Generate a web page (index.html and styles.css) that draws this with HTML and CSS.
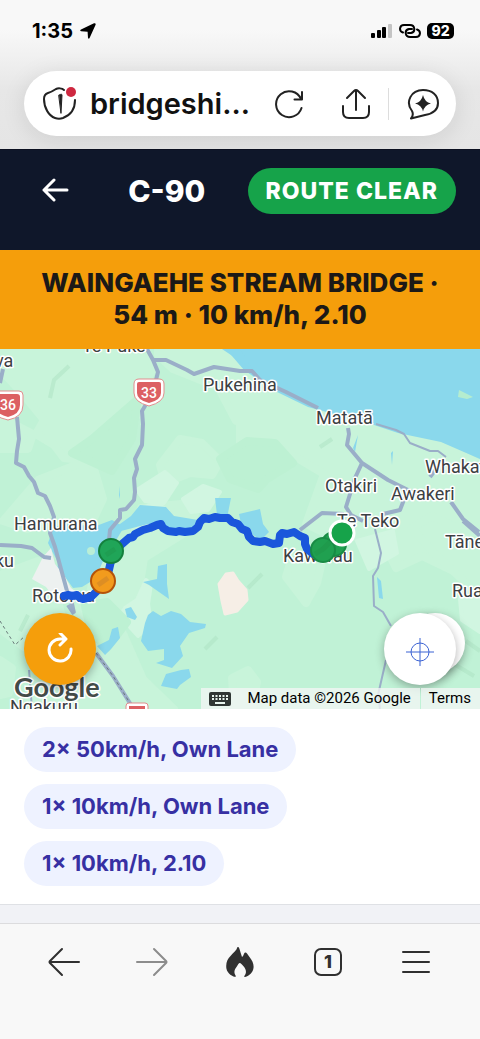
FILE: index.html
```html
<!DOCTYPE html>
<html lang="en">
    <head>
        <meta charset="utf-8" />
        <meta name="viewport" content="width=device-width, initial-scale=1.0" />
        <title>C-90 Route</title>
        <link rel="stylesheet" href="styles.css">
    </head>

    <body>
        <div class="browser-top">
            <div class="status-bar">
                <div class="status-group">
                    <span class="clock">1:35</span>
                    <svg width="16" height="16" viewBox="0 0 16 16"><path d="M1 6.500 14 .3Q16-.3 15.600 1.800L9.700 14.800Q8.700 16.500 8 14.800L7.600 8.700 1.200 8.200Q-.6 7.700 1 6.500Z"/></svg>
                </div>
                <div class="status-group status-right">
                    <svg width="22" height="16" viewBox="0 0 22 16">
                        <rect x="0" y="10" width="4" height="5" rx="1"/>
                        <rect x="6" y="7" width="4" height="8" rx="1"/>
                        <rect x="11" y="4" width="4" height="11" rx="1"/>
                        <rect x="17" y="1" width="4" height="14" rx="1" fill="#c4c4c4"/>
                    </svg>
                    <svg class="line" width="22" height="16" viewBox="0 0 22 16" stroke-width="2">
                        <path d="M4 9.500C-.5 8 .5 2 5 2h6c5 0 6 7 1 8H9"/>
                        <path d="M18 6.500c4.500 1.500 3.500 7.500-1 7.500h-6c-5 0-6-7-1-8h3"/>
                    </svg>
                    <span class="battery">92</span>
                </div>
            </div>
            <div class="address-bar">
                <button class="icon-btn" aria-label="Privacy protections">
                    <svg class="line" width="34" height="34" viewBox="0 0 34 34" stroke-width="2">
                        <path d="M21 3c-2-2-6-2-8-1-3 2-5 3-8 4-3 1-4 3-4 6 0 9 5 17 11 19 3 1 5 1 8 0 8-3 12-10 12-18"/>
                        <path d="M16 8c2-1 3-1 3 0l-1 18Z" fill="#222" stroke-width="1"/>
                        <circle cx="28" cy="5" r="5" fill="#ce2840" stroke="none"/>
                    </svg>
                </button>
                <a class="url" href="#">bridgeshi...</a>
                <button class="icon-btn reload-page" aria-label="Reload">
                    <svg class="line" width="30" height="30" viewBox="0 0 30 30" stroke-width="2">
                        <path d="M27.500 19A13 13 0 1 1 27 10"/>
                        <path d="M28 3v7.500h-7.500"/>
                    </svg>
                </button>
                <button class="icon-btn share" aria-label="Share">
                    <svg class="line" width="30" height="32" viewBox="0 0 30 32" stroke-width="2">
                        <path d="M15 22V2M6 10l7-7q2-2 4 0l7 7M2 18v6q0 6 6 6h14q6 0 6-6v-6"/>
                    </svg>
                </button>
                <button class="icon-btn chat" aria-label="Ask assistant">
                    <svg class="line" width="34" height="34" viewBox="0 0 34 34" stroke-width="2">
                        <path d="M6 24C-1 15 5 3 17 3c9 0 15 5 15 13S25 27 19 28L5 31.500Q8 28 6 24Z"/>
                        <path d="M17 8q1.500 7 8 8.500-6.500 1.500-8 8-1.500-6.500-8-8Q15.500 15 17 8Z" fill="#222" stroke="none"/>
                    </svg>
                </button>
            </div>
        </div>

        <header class="app-header">
            <button class="icon-btn back" aria-label="Back">
                <svg class="line" width="28" height="24" viewBox="0 0 28 24" stroke-width="3">
                    <path d="M25 12H2M12 2 2 12l10 10"/>
                </svg>
            </button>
            <h1>C-90</h1>
            <span class="route-status">ROUTE CLEAR</span>
        </header>

        <div class="bridge-banner">WAINGAEHE STREAM BRIDGE · 54 m · 10 km/h, 2.10</div>

        <div class="map">
            <svg class="map-canvas" viewBox="0 0 480 360" preserveAspectRatio="xMidYMid slice">
                <rect width="480" height="360" fill="#c0f2d6"/>

                <!-- lighter land -->
                <g class="land">
                    <path d="M0 0h146l7 20-11 22-2 22-28 23-17 4-15 20-16-2-10-13-18-11 8-14L22 44 0 20Z"/>
                    <path d="M0 68l33 17-5 15H0ZM38 131l53-21 12 40-18 38-38-20-20 12-24-8Z"/>
                    <path d="M180 90l22 4 18 18-8 14-22-2-25 10-5-18ZM158 0h80l40 38 30 20-17 10-55 4-18-34-45-18-15-14Z"/>
                    <path d="M240 20l100 50 67 8 73 37v120l-58-28-26 12-15-30-50-2-25-12 18-50-50-30-34 4Z"/>
                    <path d="M292 208l30 4-5 22-11 20-20-26ZM412 179l20-12 48 23v57l-47-44ZM0 226l38-14 14 16 10 40-38 30L0 280ZM95 222l34-18 12-45 60-6-15 30-42 26-8 50-28 26-24-14Z"/>
                    <path d="M80 250l41 30 22 50 31 30H24l19-36 30-23Z"/>
                    <path d="M0 311l12 8-3 25-9 2ZM232 329l16-8 9 12-5 27h-18Z"/>
                </g>
                <g class="land bright">
                    <path d="M137 141l28-18 12 11-13 20-19-2ZM183 150l20-13 17 6-12 18-17 2Z"/>
                    <path d="M146 231l5 4-3 20 3 20-13 12-18-20 5-8 12-8ZM142 159l15-5 11 8-8 16-22 4Z"/>
                    <path d="M357 192l36-10 4 22-28 16ZM460 250l20-7v40l-18-12Z"/>
                </g>
                <!-- forest -->
                <g class="land forest">
                    <path d="M92 90l46-40-6 40-20 32-40-18ZM247 92l28 2 18 20-26 16-9 10-28-10-10-20Z"/>
                    <path d="M85 257l22-4 20 20-20 26-16-16Z"/>
                </g>
                <path d="M50 49l4-18 15-14M248 239l14-14M320 98l12-8M205 300l12-12M20 282l8-16M466 292l14 10M454 315l20 12" class="ridges"/>

                <!-- water -->
                <g fill="#8ad8ec">
                    <path d="M226 0h254v110l-39-17-43-9-30-10-60-16-33-16-31-21Z"/>
                    <path d="M222 0h18l13 21-16-11Z"/>
                    <path d="M53 180l8-5 35 2 16-6 12 7-12 20-8 12-9 20-13 8-9 1-8-11-8-5 1-10-5-9-5-10Z"/>
                    <path d="M113 180l18-13 9-11 26 2 8 9 24 4-2 10-20 4-28-10-27 7ZM215 149h16l-3 15 3 6-10-2-4-2ZM239 165l21-5 3 15 6 8-8 8-19-12Z"/>
                    <path d="M158 217l9-2v20l2 15-20-14-6-3 14-3Z"/>
                    <path d="M148 266l5-4 8 5 10-5 10 3 9 8 16 2-1 4-16 5-9 13 3 10-11 12-16-5 8-3v-11l-16 2-7-10 4-18ZM125 260l6-2 6 10-2 3-8-3ZM112 280l6-2 2 11-9 11-6 6-8-9 12-6ZM166 325l15-4 8-1 2 8-11 8-3 4-16-3Z"/>
                    <path d="M377 228l4 4 2 18-4-1ZM119 146l1-9v9l-1 4ZM353 99l5-13-3 17ZM391 104l2-2-1 14Z"/>
                </g>
                <circle cx="91" cy="202" r="4" fill="#b9eed6"/>
                <path d="M459 41l14 7-6 2-9-2Z" fill="#b5edcf"/>
                <path d="M219 235l7-10 7-1 5 8 8 9 1 10-10 11-12 3-3-13Z" fill="#f6eee6" stroke="#f6eee6" stroke-width="3" stroke-linejoin="round"/>
                <path d="M43 208l8-9 4 16 9 11 7 13 7 5-3 9-16 2-13-17-14-8Z" fill="#edf1f0"/>

                <!-- highways -->
                <g class="roads">
                    <path d="M147 0l6 11 5 12-2 8-11 26-3 5 1 13-1 21-7 14 2 10-3 9 1 14-1 8-8 9-6 1v8l-10 12-1 10"/>
                    <path d="M153 11h13l21 10 7 4 20-7 26 4h12l8 9 26 12 32 16"/>
                    <path d="M3 20L0 34M17 68l2 22-2 12-1 12 8 4 5 9 5 6 4 11 7 3 5 10 4 11-4 16 5 14 12 44 5 13 2 9"/>
                    <path d="M0 196l21 1 11 2 12 9 7 1"/>
                    <path d="M348 79l1 6-2 11 15 18 26 17 16 8 16 8"/>
                    <path d="M362 114l-7 15-9 29 5 8 12 6M300 181l22-17 22 1M383 165l17-4 5-13M430 128l6-8M451 153l12 17 16 13"/>
                    <path d="M463 172l17 15M68 256l6 9M72 250l10-5" />
                </g>
                <g class="roads minor">
                    <path d="M376 75l20 6 8 4 6 9 20 8h8l8 6M375 180l6 24-3 15-5 8 1 30 9 6 8 14M386 311l-8 35 2 14M32 360l-3-39"/>
                </g>
                <path d="M96 304l17 23 20 32" class="roads"/>
                <path d="M96 304l17 23 20 32M0 272l15 24 10-9" class="track"/>

                <!-- towns -->
                <g class="places">
                    <text x="82" y="3">Te Puke</text>
                    <text x="-5" y="18">va</text>
                    <text x="203" y="42">Pukehina</text>
                    <text x="316" y="75">Matatā</text>
                    <text x="425" y="124">Whakatāne</text>
                    <text x="325" y="143">Otakiri</text>
                    <text x="391" y="151">Awakeri</text>
                    <text x="337" y="178">Te Teko</text>
                    <text x="14" y="181">Hamurana</text>
                    <text x="-5" y="218">ku</text>
                    <text x="32" y="253">Rotorua</text>
                    <text x="283" y="213">Kawerau</text>
                    <text x="445" y="199">Tāneatua</text>
                    <text x="452" y="248">Ruatoki</text>
                    <text x="10" y="364">Ngakuru</text>
                </g>

                <!-- route shields -->
                <g class="shields">
                    <path class="shield-edge" d="M-4 42H19q4 0 4 4v10q0 12-15 15Q-8 68-8 56V46q0-4 4-4Z"/>
                    <path class="shield" d="M-4 45H17q3 0 3 3v8q0 9-12 12Q-5 65-5 56v-8Z"/>
                    <text x="8" y="61">36</text>
                    <path class="shield-edge" d="M139 30h20q5 0 5 5v9q0 9-15 13-15-4-15-13v-9q0-5 5-5Z"/>
                    <path class="shield" d="M139 33h20q2 0 2 2v9q0 7-12 10-12-3-12-10v-9q0-2 2-2Z"/>
                    <text x="149" y="49">33</text>
                    <rect class="shield-edge" x="126" y="354" width="22" height="10" rx="3"/>
                    <rect class="shield" x="129" y="357" width="16" height="8"/>
                </g>

                <!-- planned route -->
                <path class="route" d="M64 247l4-1 4 1 5-1 3 3 3 1 8-2 7-7 5-3 5-13 3-13 2-8 9-9 7-6 4-1 2-3 8-4 7-2 7-3 4-1 2 4 5 3 8 1 3-1 6 1 8-1 5-4 2-5 4-4 5 1 6-2 5 1h8l4 4 6 2 4 5 5 2 2 6 4 4 7 1 5-1 8 3 6-1 1-8 2-2 5 1 7-2 6 4 5 2v6l2 5 6 5 8-2"/>
                <g stroke-width="2">
                    <circle cx="334" cy="195" r="12" fill="#20a050" stroke="#188b44"/>
                    <circle cx="323" cy="201" r="12" fill="#20a050" stroke="#188b44"/>
                    <circle cx="111" cy="202" r="12" fill="#20a558" stroke="#14803d"/>
                    <circle cx="103" cy="232" r="12" fill="#f29b1d" stroke="#b45309"/>
                    <path d="M315 205l8-5 7-7M106 206l9-6" stroke="#20813c" fill="none" opacity=".2" stroke-width="5"/>
                    <path d="M98 236l10-7" stroke="#c9832c" opacity=".5" stroke-width="5"/>
                    <circle cx="342" cy="184" r="12" fill="#16a34a" stroke="#fff" stroke-width="3"/>
                </g>
                <text x="14" y="348" class="logo">Google</text>
            </svg>

            <button class="map-btn refresh" aria-label="Refresh route">
                <svg class="line" width="28" height="32" viewBox="0 2 28 32" stroke-width="3">
                    <path d="M25 18A11 11 0 1 1 14 8h5M14 2l6 6-6 6"/>
                </svg>
            </button>
            <button class="map-btn camera" aria-label="Map camera controls"></button>
            <button class="map-btn locate" aria-label="Centre on location">
                <svg width="30" height="30" viewBox="0 0 30 30" fill="none" stroke="#3b62d3" stroke-width="1">
                    <circle cx="15" cy="15" r="9"/>
                    <path d="M15 1v28M1 15h28"/>
                </svg>
            </button>
            <div class="attribution">
                <button class="keyboard" aria-label="Keyboard shortcuts">
                    <svg width="22" height="14" viewBox="0 0 22 14">
                        <rect width="22" height="14" rx="2" fill="#303734"/>
                        <path d="M3 4h16M3 7h16" stroke="#e8f5ee" stroke-width="2" stroke-dasharray="2 1.500"/>
                        <path d="M6 11h10" stroke="#e8f5ee" stroke-width="2"/>
                    </svg>
                </button>
                <span>Map data ©2026 Google</span>
                <a href="#">Terms</a>
            </div>
        </div>

        <ul class="limits">
            <li>2× 50km/h, Own Lane</li>
            <li>1× 10km/h, Own Lane</li>
            <li>1× 10km/h, 2.10</li>
        </ul>
        <div class="page-rest"></div>

        <nav class="browser-toolbar">
            <button class="icon-btn" aria-label="Previous page">
                <svg class="line" width="32" height="30" viewBox="0 0 32 30" stroke-width="2"><path d="M31 15H2M14 2 2 14q-1 1 0 2l12 12"/></svg>
            </button>
            <button class="icon-btn" aria-label="Next page" disabled>
                <svg class="line" width="32" height="30" viewBox="0 0 32 30" stroke-width="2"><path d="M1 15h29M18 2l12 12q1 1 0 2L18 28"/></svg>
            </button>
            <button class="icon-btn" aria-label="Clear data">
                <svg width="28" height="30" viewBox="0 0 28 30" fill="#303030"><path d="M11.500 0c1-.3 1.500.5 2 2 .7 2.500 1.500 5 2.500 8 1.800-1 1.800-4 3-4.500 1.300-.5 2.500 1.500 4.500 4.500 3 4 4.500 7 4 11-.7 4.500-4 8-8.500 8.900-1 .1-1-.6-.5-1.200 2.500-3.500 1.500-6.500-1-9.500-1.700-2-3-3.500-4-3.200-1 .3-1.500 2-3 4-2 2.500-2.700 5-1.500 7.500.5 1 1.200 1.800.6 2.200C8.500 30.500 1.500 27.500.4 21.500-.4 16 1.500 12 4.500 9c3-3.500 6-5.500 7-9Z"/></svg>
            </button>
            <button class="icon-btn" aria-label="Tabs"><span class="tab-count">1</span></button>
            <button class="icon-btn" aria-label="Menu">
                <svg class="line" width="30" height="24" viewBox="0 0 30 24" stroke-width="2"><path d="M2 2h26M2 12h26M2 22h26"/></svg>
            </button>
        </nav>
    </body>
</html>
```
FILE: styles.css
```css
* {
    box-sizing: border-box;
}
body {
    margin: 0;
    min-height: 100vh;
    display: flex;
    flex-direction: column;
    background: #fff;
    font-family: Inter, "Liberation Sans", sans-serif;
}
button {
    padding: 0;
    border: none;
    background: none;
    color: inherit;
    font: inherit;
    cursor: pointer;
}
.icon-btn {
    display: flex;
    align-items: center;
    justify-content: center;
}
.line {
    fill: none;
    stroke: currentColor;
    stroke-linecap: round;
    stroke-linejoin: round;
}

/* browser top */
.browser-top {
    height: 149px;
    padding: 18px 24px 0;
    background: linear-gradient(#f8f8f8 20%, #e7e7e7 60%, #e5e5e5);
    color: #222;
    overflow: hidden;
}
.status-bar {
    height: 53px;
    padding: 0 2px 0 8px;
    display: flex;
    justify-content: space-between;
    align-items: flex-start;
    color: #000;
}
.status-group {
    display: flex;
    align-items: center;
    gap: 7px;
    height: 25px;
}
.status-right {
    gap: 6px;
}
.clock {
    font-size: 20px;
    font-weight: 700;
}
.battery {
    width: 27px;
    height: 16px;
    border-radius: 5px;
    background: #000;
    color: #fff;
    font-size: 14px;
    font-weight: 800;
    line-height: 16px;
    text-align: center;
}
.address-bar {
    height: 65px;
    padding: 0 16px 0 19px;
    display: flex;
    align-items: center;
    background: #fff;
    border-radius: 33px;
    box-shadow: 0 4px 24px rgba(0, 0, 0, 0.1);
}
.url {
    flex: 1;
    padding-left: 13px;
    color: #111;
    font-size: 29px;
    font-weight: 600;
    text-decoration: none;
    white-space: nowrap;
}
.share {
    margin: 0 17px 0 37px;
}
.chat {
    height: 32px;
    padding-left: 17px;
    border-left: 1px solid #ddd;
}

/* app */
.app-header {
    height: 101px;
    padding: 18px 24px 0 42px;
    display: flex;
    align-items: flex-start;
    justify-content: space-between;
    background: #0f172a;
    border-top: 1px solid #0b1020;
    color: #fff;
}
.back {
    height: 44px;
}
.app-header h1 {
    margin: 0 0 0 16px;
    font-size: 30px;
    font-weight: 800;
    line-height: 46px;
}
.route-status {
    padding: 0 18px;
    border-radius: 24px;
    background: #16a34a;
    font-size: 23px;
    font-weight: 800;
    line-height: 46px;
    letter-spacing: 1px;
}
.bridge-banner {
    padding: 17px 24px 18px;
    background: #f59e0b;
    color: #1c1917;
    font-size: 26px;
    font-weight: 800;
    line-height: 32px;
    text-align: center;
}

/* map */
.map {
    position: relative;
    height: 360px;
    overflow: hidden;
    font-family: Roboto, sans-serif;
}
.map-canvas {
    display: block;
    width: 100%;
    height: 100%;
}
.land {
    fill: #c8f4da;
    stroke: #c8f4da;
    stroke-width: 8;
    stroke-linejoin: round;
}
.bright {
    fill: #d1f6e1;
    stroke: #d1f6e1;
    stroke-width: 4;
}
.forest {
    fill: #bdf1d3;
    stroke: #bdf1d3;
}
.ridges {
    fill: none;
    stroke: #abe2c1;
    stroke-width: 4;
    opacity: 0.5;
}
.roads {
    fill: none;
    stroke: #9aaec8;
    stroke-width: 4;
    stroke-linejoin: round;
}
.minor {
    stroke-width: 2;
}
.track {
    fill: none;
    stroke: #667777;
    stroke-width: 1;
    stroke-dasharray: 3 3;
}
.places text {
    fill: #3c4043;
    stroke: #fff;
    stroke-width: 3px;
    stroke-linejoin: round;
    paint-order: stroke;
    font-size: 18px;
}
.shield-edge {
    fill: #fff;
    stroke: #e28d8e;
    stroke-width: 1;
}
.shield {
    fill: #dc6063;
}
.shields text {
    fill: #fff;
    font-size: 14px;
    font-weight: 500;
    text-anchor: middle;
}
.route {
    fill: none;
    stroke: #1a56db;
    stroke-width: 8;
    stroke-linecap: round;
    stroke-linejoin: round;
}
.logo {
    fill: #444b48;
    stroke: #fff;
    stroke-width: 3px;
    paint-order: stroke;
    font-family: Lato, sans-serif;
    font-size: 27px;
    font-weight: 700;
}
.map-btn {
    position: absolute;
    bottom: 24px;
    display: flex;
    align-items: center;
    justify-content: center;
    width: 72px;
    height: 72px;
    border-radius: 50%;
    background: #fff;
    box-shadow: 0 3px 10px rgba(0, 0, 0, 0.3);
}
.refresh {
    left: 24px;
    background: #f59e0b;
    color: #fff;
}
.locate {
    right: 24px;
    padding-top: 6px;
}
.camera {
    right: 15px;
    bottom: 36px;
    width: 60px;
    height: 60px;
}
.attribution {
    position: absolute;
    right: 0;
    bottom: 0;
    display: flex;
    height: 21px;
    color: #000;
    font-size: 15px;
    line-height: 21px;
}
.attribution > * {
    padding: 0 9px 0 8px;
    background: rgba(245, 245, 245, 0.75);
}
.attribution a {
    margin-left: 1px;
    color: #000;
    text-decoration: none;
}
.attribution .keyboard {
    display: flex;
    align-items: center;
    padding: 0 8px;
}

/* speed limits */
.limits {
    margin: 0;
    padding: 18px 24px;
    display: flex;
    flex-direction: column;
    align-items: flex-start;
    gap: 12px;
    list-style: none;
    border-bottom: 1px solid #dfe1e5;
}
.limits li {
    padding: 0 18px;
    border-radius: 24px;
    background: #eef2ff;
    color: #3730a3;
    font-size: 22px;
    font-weight: 700;
    line-height: 45px;
}
.page-rest {
    flex: 1;
    background: #f1f2f6;
}

/* browser bottom */
.browser-toolbar {
    height: 116px;
    padding: 22px 20px 0;
    display: flex;
    align-items: flex-start;
    background: #f8f8f8;
    border-top: 1px solid #dcdcde;
    color: #303030;
}
.browser-toolbar .icon-btn {
    flex: 1;
    height: 32px;
}
.browser-toolbar .icon-btn:disabled {
    color: #8c8c8c;
}
.tab-count {
    width: 28px;
    height: 28px;
    border: 2px solid #303030;
    border-radius: 7px;
    font-size: 18px;
    font-weight: 800;
    line-height: 24px;
}
```
